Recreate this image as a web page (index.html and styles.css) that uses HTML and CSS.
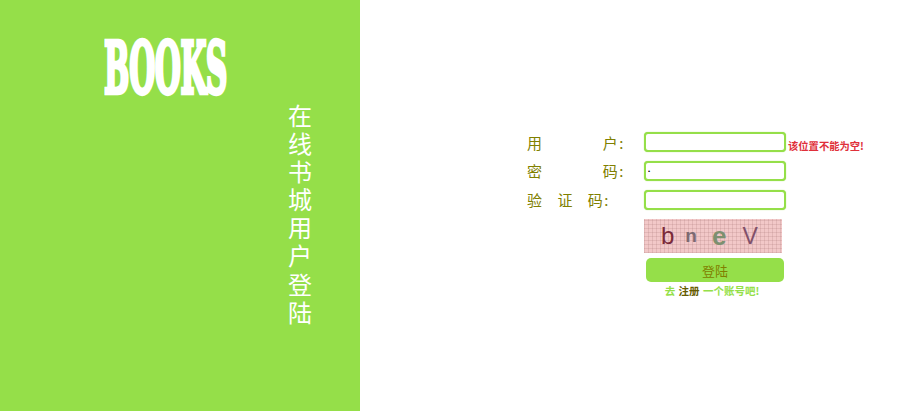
FILE: index.html
```html
<!DOCTYPE html>
<html lang="en">
<head>
    <meta charset="UTF-8">
    <meta name="viewport" content="width=device-width, initial-scale=1.0">
    <title>在线书城用户登陆</title>
    <link rel="stylesheet" href="styles.css">
</head>
<body>
    <div class="page">
        <div class="side">
            <div class="logo">BOOKS</div>
            <div class="slogan">在线书城用户登陆</div>
        </div>
        <form class="login">
            <div class="row">
                <label class="label" for="username"><span>用</span><span>户:</span></label>
                <input class="field" type="text" id="username">
                <span class="error">该位置不能为空!</span>
            </div>
            <div class="row">
                <label class="label" for="password"><span>密</span><span>码:</span></label>
                <input class="field" type="password" id="password" value="a">
            </div>
            <div class="row">
                <label class="label label-short" for="code"><span>验</span><span>证</span><span>码:</span></label>
                <input class="field" type="text" id="code">
            </div>
            <div class="captcha">
                <span class="c1">b</span>
                <span class="c2">n</span>
                <span class="c3">e</span>
                <span class="c4">V</span>
            </div>
            <button class="submit" type="button">登陆</button>
            <p class="hint">去 <a href="#">注册</a> 一个账号吧!</p>
        </form>
    </div>
</body>
</html>
```

FILE: styles.css
```css
html, body {
    margin: 0;
    padding: 0;
    background-color: #fff;
}

body {
    font-family: "Noto Sans CJK SC", "Liberation Serif", serif;
    overflow: hidden;
}

.page {
    display: flex;
    height: 411px;
}

/* left green panel */
.side {
    width: 360px;
    height: 411px;
    background-color: #95df49;
    color: #fff;
    box-sizing: border-box;
    padding-top: 38px;
}

.logo {
    width: 124px;
    height: 62px;
    margin-left: 104px;
    font-family: "DejaVu Serif", serif;
    font-weight: bold;
    font-size: 50px;
    line-height: 62px;
    letter-spacing: -1px;
    white-space: nowrap;
    -webkit-text-stroke: 3px #fff;
    transform: scale(0.6, 1.42);
    transform-origin: left center;
}

.slogan {
    width: 24px;
    margin: 1px 0 0 288px;
    font-size: 24px;
    font-weight: 400;
    line-height: 28.1px;
}

/* login form */
.login {
    margin-left: 167px;
    padding-top: 132px;
    color: #808000;
}

.row {
    display: flex;
    align-items: center;
    height: 20px;
    margin-bottom: 8.75px;
}

.label {
    display: flex;
    justify-content: space-between;
    width: 98px;
    margin-right: 19px;
    font-size: 15px;
    letter-spacing: 1.5px;
}

.label-short {
    width: 83px;
    margin-right: 34px;
}

.field {
    width: 142px;
    height: 20px;
    box-sizing: border-box;
    padding: 0 2px;
    border: 2px solid #95df49;
    border-radius: 4px;
    box-shadow: 0 0 1px #95df49;
    outline: none;
    font-size: 6px;
}

.error {
    margin-left: 2px;
    padding-top: 6px;
    font-size: 10.3px;
    font-weight: bold;
    color: #e0303a;
    white-space: nowrap;
}

.captcha {
    display: flex;
    align-items: center;
    width: 138px;
    height: 34px;
    margin: 9.5px 0 5px 117px;
    box-sizing: border-box;
    padding: 0 0 0 17px;
    background-color: #f2c8c8;
    background-image:
        repeating-linear-gradient(90deg, rgba(170, 120, 120, 0.22) 0 1px, transparent 1px 4px),
        repeating-linear-gradient(0deg, rgba(170, 120, 120, 0.22) 0 1px, transparent 1px 4px);
    font-family: "Liberation Sans", sans-serif;
}

.c1 { font-size: 24px; color: #7a2a3a; }
.c2 { font-size: 19px; color: #7d6a72; font-weight: bold; margin-left: 11px; }
.c3 { font-size: 26px; color: #7d9070; font-weight: bold; margin-left: 15px; }
.c4 { font-size: 23px; color: #80506a; margin-left: 16px; }

.submit {
    display: block;
    width: 138px;
    height: 24px;
    margin-left: 119px;
    padding: 0;
    border: none;
    border-radius: 5px;
    background-color: #95df49;
    color: #808000;
    font-family: inherit;
    font-size: 13px;
}

.hint {
    width: 138px;
    margin: 0.5px 0 0 116px;
    text-align: center;
    font-size: 10.5px;
    font-weight: bold;
    color: #95df49;
    word-spacing: 1px;
}

.hint a {
    color: #665c00;
    text-decoration: none;
}
```
